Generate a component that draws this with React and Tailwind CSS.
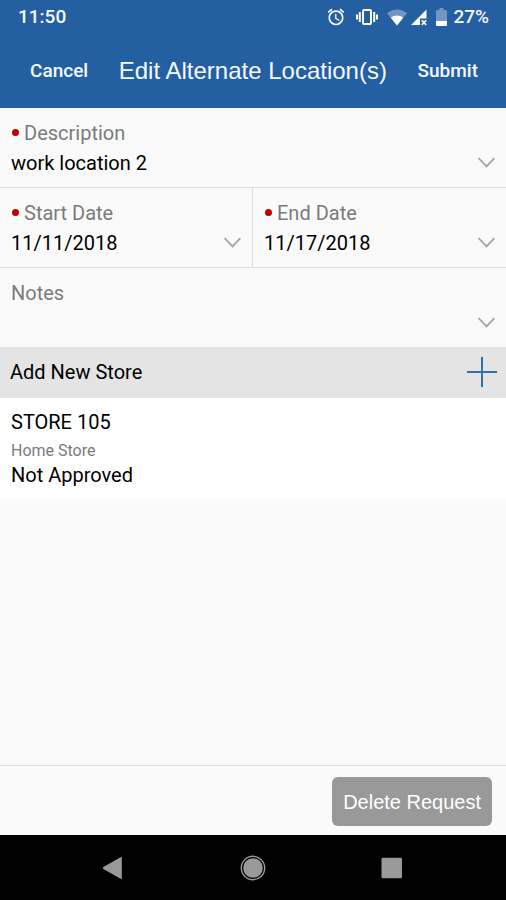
import React from "react";

function AlarmIcon() {
  return (
    <svg width="20" height="20" viewBox="0 0 24 24" fill="#fff" aria-hidden="true">
      <path d="M22 5.72l-4.6-3.86-1.29 1.53 4.6 3.86L22 5.72zM7.88 3.39L6.6 1.86 2 5.71l1.29 1.53 4.59-3.85zM12.5 8H11v6l4.75 2.85.75-1.23-4-2.37V8zM12 4c-4.97 0-9 4.03-9 9s4.02 9 9 9c4.97 0 9-4.03 9-9s-4.03-9-9-9zm0 16c-3.87 0-7-3.13-7-7s3.13-7 7-7 7 3.13 7 7-3.13 7-7 7z" />
    </svg>
  );
}

function VibrateIcon() {
  return (
    <svg width="24" height="18" viewBox="0 0 24 18" fill="none" stroke="#fff" aria-hidden="true">
      <rect x="8" y="2" width="8" height="14" rx="1" strokeWidth="2" />
      <path d="M4.8 4v10M19.2 4v10" strokeWidth="2" />
      <path d="M2 6.5v5M22 6.5v5" strokeWidth="2" />
    </svg>
  );
}

function WifiIcon() {
  return (
    <svg width="20" height="17" viewBox="0 0 20 17" fill="#fff" aria-hidden="true">
      <path d="M0 4.2C6-.9 14-.9 20 4.2L10 16.5z" opacity=".35" />
      <path d="M3.8 8.8C7.4 5.9 12.6 5.9 16.2 8.8L10 16.5z" />
    </svg>
  );
}

function SignalIcon() {
  return (
    <svg width="16" height="17" viewBox="0 0 16 17" aria-hidden="true">
      <path d="M0 16L15.5 0.5V9.5H9V16z" fill="#fff" />
      <path d="M10.8 11.3l4.4 4.6M15.2 11.3l-4.4 4.6" stroke="#fff" strokeWidth="1.6" />
    </svg>
  );
}

function BatteryIcon() {
  return (
    <svg width="11" height="18" viewBox="0 0 11 18" fill="#fff" aria-hidden="true">
      <path d="M1 2h2.5V0h4v2H10a1 1 0 0 1 1 1v10H0V3a1 1 0 0 1 1-1z" opacity=".35" />
      <path d="M0 13h11v4a1 1 0 0 1-1 1H1a1 1 0 0 1-1-1z" />
    </svg>
  );
}

function Chevron() {
  return (
    <svg
      className="pointer-events-none absolute right-[11px] bottom-[19px]"
      width="17"
      height="11"
      viewBox="0 0 17 11"
      fill="none"
      stroke="#a3a3a3"
      strokeWidth="1.8"
      aria-hidden="true"
    >
      <path d="M0.6 1.2L8.5 9.4L16.4 1.2" />
    </svg>
  );
}

function Label({ id, required, children }) {
  return (
    <label htmlFor={id} className="flex items-center text-[20px] leading-[30px] text-[#7b7b7b]">
      {required && <span className="mr-[5px] mb-0.5 ml-px size-[7px] rounded-full bg-[#c00000]" />}
      {children}
    </label>
  );
}

function SelectField({ id, label, value, className = "" }) {
  return (
    <div className={`relative border-b border-[#dedede] px-[11px] pt-[10px] pb-[9px] ${className}`}>
      <Label id={id} required>{label}</Label>
      <select
        id={id}
        required
        defaultValue={value}
        className="block h-[30px] w-full appearance-none bg-transparent text-[20px] leading-[30px] text-black outline-none"
      >
        <option>{value}</option>
      </select>
      <Chevron />
    </div>
  );
}

export default function App() {
  return (
    <div className="flex min-h-screen flex-col bg-[#fafafa] font-[Roboto,sans-serif] text-[20px] text-black">
      <header className="bg-[#245fa1] text-[#f4faff]">
        <div className="flex h-[34px] items-center justify-between pr-[17px] pl-[18px] font-medium">
          <span className="text-[19px]">11:50</span>
          <div className="flex items-center">
            <AlarmIcon />
            <span className="ml-[9px]"><VibrateIcon /></span>
            <span className="ml-[8px]"><WifiIcon /></span>
            <span className="ml-[4px]"><SignalIcon /></span>
            <span className="ml-[9px]"><BatteryIcon /></span>
            <span className="ml-[6px] text-[19px]">27%</span>
          </div>
        </div>
        <div className="flex h-[74px] items-center justify-between pr-[28px] pl-[30px]">
          <button type="button" className="text-[19px] font-medium">Cancel</button>
          <h1 className="font-['Liberation_Sans',Arial,sans-serif] text-[24px]">Edit Alternate Location(s)</h1>
          <button type="button" className="text-[19px] font-medium">Submit</button>
        </div>
      </header>

      <main className="flex-1">
        <form>
          <SelectField id="description" label="Description" value="work location 2" />
          <div className="grid grid-cols-2">
            <SelectField id="start" label="Start Date" value="11/11/2018" className="border-r" />
            <SelectField id="end" label="End Date" value="11/17/2018" />
          </div>
          <div className="relative px-[11px] pt-[10px] pb-[9px]">
            <Label id="notes">Notes</Label>
            <textarea
              id="notes"
              rows={1}
              className="block h-[30px] w-full resize-none bg-transparent leading-[30px] outline-none"
            />
            <Chevron />
          </div>
        </form>
        <section>
          <div className="flex h-[51px] items-center justify-between bg-[#e4e4e4] pr-[9px] pb-px pl-[10px]">
            <h2>Add New Store</h2>
            <button type="button" aria-label="Add new store">
              <svg width="30" height="30" viewBox="0 0 30 30" stroke="#2f74a8" strokeWidth="2" aria-hidden="true">
                <path d="M15 0V30M0 15H30" />
              </svg>
            </button>
          </div>
          <div className="bg-white px-[11px] pt-[9px] pb-[14px]">
            <p className="leading-[30px]">STORE 105</p>
            <p className="text-[16px] leading-[28px] text-[#7b7b7b]">Home Store</p>
            <p className="leading-[20px]">Not Approved</p>
          </div>
        </section>
      </main>

      <footer className="flex justify-end border-t border-[#dedede] px-[14px] pt-[11px] pb-[9px]">
        <button
          type="button"
          className="h-[49px] rounded-md bg-[#999] px-[11px] font-['Liberation_Sans',Arial,sans-serif] text-[20px] text-white"
        >
          Delete Request
        </button>
      </footer>
      <nav className="flex h-[65px] items-center justify-center gap-[114px] bg-black">
        <button type="button" aria-label="Back">
          <svg width="24" height="24" viewBox="0 0 24 24" fill="#999" aria-hidden="true">
            <path d="M19.8 1.8V22.2Q19.8 23.4 18.6 22.8L1.3 13Q.1 12 1.3 11L18.6 1.2Q19.8.6 19.8 1.8z" />
          </svg>
        </button>
        <button type="button" aria-label="Home">
          <svg width="26" height="26" viewBox="0 0 26 26" aria-hidden="true">
            <circle cx="13" cy="13" r="11.7" fill="none" stroke="#999" strokeWidth="1.4" />
            <circle cx="13" cy="13" r="9.8" fill="#999" />
          </svg>
        </button>
        <button type="button" aria-label="Recent apps">
          <svg width="24" height="24" viewBox="0 0 24 24" fill="#999" aria-hidden="true">
            <rect x="1.5" y="1.7" width="20.5" height="20.5" rx="1.2" />
          </svg>
        </button>
      </nav>
    </div>
  );
}
